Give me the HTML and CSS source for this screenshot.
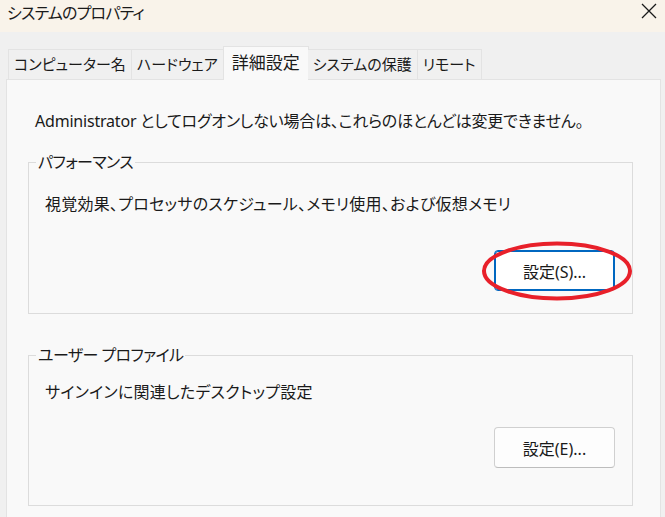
FILE: index.html
```html
<!DOCTYPE html>
<html>
<head>
    <meta charset="utf-8">
    <title>システムのプロパティ</title>
    <link rel="stylesheet" href="styles.css">
</head>
<body>
    <div class="titlebar">
        <span class="title">システムのプロパティ</span>
        <svg class="close" width="16" height="16" viewBox="0 0 16 16">
            <path d="M1 1 L15 15 M15 1 L1 15" stroke="#1a1a1a" stroke-width="1.3" fill="none"/>
        </svg>
    </div>

    <div class="tabs">
        <div class="tab">コンピューター名</div>
        <div class="tab">ハードウェア</div>
        <div class="tab active">詳細設定</div>
        <div class="tab">システムの保護</div>
        <div class="tab">リモート</div>
    </div>

    <div class="panel">
        <p class="notice">Administrator としてログオンしない場合は、これらのほとんどは変更できません。</p>

        <fieldset class="group group-perf">
            <legend>パフォーマンス</legend>
            <p class="desc">視覚効果、プロセッサのスケジュール、メモリ使用、および仮想メモリ</p>
            <div class="actions">
                <button class="btn focused">設定(S)...</button>
            </div>
            <svg class="mark" width="156" height="64" viewBox="0 0 156 64">
                <ellipse cx="78" cy="32" rx="73" ry="27.5" stroke="#e8202a" stroke-width="4" fill="none"/>
            </svg>
        </fieldset>

        <fieldset class="group group-profile">
            <legend>ユーザー プロファイル</legend>
            <p class="desc">サインインに関連したデスクトップ設定</p>
            <div class="actions">
                <button class="btn">設定(E)...</button>
            </div>
        </fieldset>
    </div>
</body>
</html>
```

FILE: styles.css
```css
body {
    margin: 0;
    width: 665px;
    height: 517px;
    overflow: hidden;
    background-color: #f0f0f0;
    font-family: "Noto Sans", "Noto Sans CJK JP", sans-serif;
    font-feature-settings: "palt";
    color: #1a1a1a;
}

.titlebar {
    height: 32px;
    background-color: #f9f3ea;
    display: flex;
    align-items: flex-start;
    justify-content: space-between;
}

.title {
    font-size: 16px;
    line-height: 26px;
    padding-left: 7px;
    letter-spacing: -0.8px;
}

.close {
    margin: 3px 8px 0 0;
}

.tabs {
    display: flex;
    align-items: flex-end;
    margin: 14px 0 0 8px;
    position: relative;
    z-index: 1;
}

.tab {
    height: 29px;
    line-height: 28px;
    padding: 0 5px;
    font-size: 15px;
    border: 1px solid #e3e3e3;
    border-bottom: none;
    border-left: none;
    background-color: #f0f0f0;
}

.tab:first-child {
    border-left: 1px solid #e3e3e3;
}

.tab.active {
    height: 33px;
    line-height: 32px;
    padding: 0 8px;
    margin: 0 -1px -1px -1px;
    font-size: 17px;
    border-left: 1px solid #e3e3e3;
    background-color: #f9f9f9;
}

.panel {
    margin-left: 6px;
    width: 655px;
    height: 460px;
    background-color: #f9f9f9;
    border: 1px solid #e3e3e3;
    padding: 0 0 0 21px;
    box-sizing: border-box;
}

.notice {
    margin: 30px 0 0 7px;
    font-size: 16px;
    line-height: 22px;
    letter-spacing: -0.2px;
}

.group {
    position: relative;
    width: 605px;
    margin: 20px 0 0 0;
    padding: 0;
    border: 1px solid #dcdcdc;
    box-sizing: border-box;
}

.group-perf {
    height: 162px;
}

.group-profile {
    height: 161px;
    margin-top: 31px;
}

legend {
    font-size: 16px;
    line-height: 20px;
    margin-left: 7px;
    padding: 0 2px;
    letter-spacing: -0.6px;
}

.desc {
    margin: 21px 0 0 16px;
    font-size: 16px;
    line-height: 22px;
    letter-spacing: 0.25px;
}

.group-profile .desc {
    margin-top: 16px;
}

.actions {
    display: flex;
    justify-content: flex-end;
    padding-right: 17px;
    margin-top: 35px;
}

.group-profile .actions {
    margin-top: 24px;
}

.btn {
    width: 121px;
    height: 41px;
    font-family: inherit;
    font-size: 16px;
    color: #1a1a1a;
    background-color: #fdfdfd;
    border: 1px solid #d0d0d0;
    border-bottom-color: #bdbdbd;
    border-radius: 4px;
}

.btn.focused {
    background-color: #ffffff;
    border: 1px solid #0067c0;
    box-shadow: inset 0 0 0 1px #0067c0;
}

.mark {
    position: absolute;
    left: 450px;
    top: 67px;
}
```
